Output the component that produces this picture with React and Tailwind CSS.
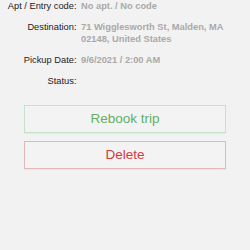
import React from "react";

const rows = [
  { label: "Apt / Entry code:", value: ["No apt. / No code"] },
  { label: "Destination:", value: ["71 Wigglesworth St, Malden, MA", "02148, United States"] },
  { label: "Pickup Date:", value: ["9/6/2021 / 2:00 AM"] },
  { label: "Status:", value: [] },
];

export default function App() {
  return (
    <div
      className="w-[250px] h-[250px] bg-[#f2f2f2] pt-[1px]"
      style={{ fontFamily: '"Liberation Sans", Arial, sans-serif' }}
    >
      <div className="flex flex-col gap-[9.5px] text-[9.3px] leading-[11.5px]">
        {rows.map((r) => (
          <div key={r.label} className="flex">
            <div className="w-[76.5px] shrink-0 whitespace-nowrap text-right text-[#222]">{r.label}</div>
            <div className="ml-[4.5px] whitespace-nowrap font-bold text-[#a9a9a9]">
              {r.value.length ? r.value.map((v) => <div key={v}>{v}</div>) : <div>&nbsp;</div>}
            </div>
          </div>
        ))}
      </div>
      <div className="mt-[18px] mx-[24px] flex flex-col gap-[8px]">
        <button className="h-[28px] w-full border border-[#c8e2c8] bg-[#f3f3f3] text-[13.5px] text-[#63b063] shadow-[0_1px_1px_rgba(0,0,0,0.04)]">
          Rebook trip
        </button>
        <button className="h-[28px] w-full border border-[#e2b8b8] bg-[#f3f3f3] text-[13.5px] text-[#d23c3c] shadow-[0_1px_1px_rgba(0,0,0,0.04)]">
          Delete
        </button>
      </div>
    </div>
  );
}
